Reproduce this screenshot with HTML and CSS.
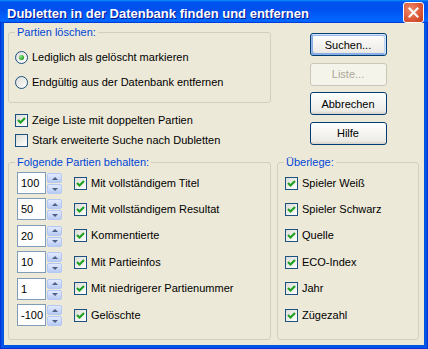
FILE: index.html
```html
<!DOCTYPE html>
<html lang="de">

<head>
    <meta charset="UTF-8">
    <title>Dubletten in der Datenbank finden und entfernen</title>
    <link rel="stylesheet" href="styles.css">
</head>

<body>
    <div class="window">
        <div class="titlebar">
            <span class="title">Dubletten in der Datenbank finden und entfernen</span>
            <div class="close">
                <svg width="11" height="11" viewBox="0 0 11 11">
                    <path d="M1.5 1.5 L9.5 9.5 M9.5 1.5 L1.5 9.5" stroke="#fff" stroke-width="2" stroke-linecap="square"></path>
                </svg>
            </div>
        </div>

        <div class="client">
            <div class="left-top">
                <fieldset class="group">
                    <legend>Partien löschen:</legend>
                    <div class="radios">
                        <div class="option"><span class="radio checked"></span>Lediglich als gelöscht markieren</div>
                        <div class="option"><span class="radio"></span>Endgültig aus der Datenbank entfernen</div>
                    </div>
                </fieldset>
                <div class="checks">
                    <div class="option"><span class="check on"><svg width="11" height="11" viewBox="0 0 11 11"><path d="M2 5 L4.5 7.5 L9 3" fill="none" stroke="#21A121" stroke-width="2.2"></path></svg></span>Zeige Liste mit doppelten Partien</div>
                    <div class="option"><span class="check"></span>Stark erweiterte Suche nach Dubletten</div>
                </div>
            </div>

            <div class="buttons">
                <div class="btn default">Suchen...</div>
                <div class="btn disabled">Liste...</div>
                <div class="btn">Abbrechen</div>
                <div class="btn">Hilfe</div>
            </div>

            <fieldset class="group rows-group">
                <legend>Folgende Partien behalten:</legend>
                <div class="rows">
                    <div class="row">
                        <span class="edit">100</span>
                        <span class="spin"><span class="up"></span><span class="down"></span></span>
                        <span class="option"><span class="check on"><svg width="11" height="11" viewBox="0 0 11 11"><path d="M2 5 L4.5 7.5 L9 3" fill="none" stroke="#21A121" stroke-width="2.2"></path></svg></span>Mit vollständigem Titel</span>
                    </div>
                    <div class="row">
                        <span class="edit">50</span>
                        <span class="spin"><span class="up"></span><span class="down"></span></span>
                        <span class="option"><span class="check on"><svg width="11" height="11" viewBox="0 0 11 11"><path d="M2 5 L4.5 7.5 L9 3" fill="none" stroke="#21A121" stroke-width="2.2"></path></svg></span>Mit vollständigem Resultat</span>
                    </div>
                    <div class="row">
                        <span class="edit">20</span>
                        <span class="spin"><span class="up"></span><span class="down"></span></span>
                        <span class="option"><span class="check on"><svg width="11" height="11" viewBox="0 0 11 11"><path d="M2 5 L4.5 7.5 L9 3" fill="none" stroke="#21A121" stroke-width="2.2"></path></svg></span>Kommentierte</span>
                    </div>
                    <div class="row">
                        <span class="edit">10</span>
                        <span class="spin"><span class="up"></span><span class="down"></span></span>
                        <span class="option"><span class="check on"><svg width="11" height="11" viewBox="0 0 11 11"><path d="M2 5 L4.5 7.5 L9 3" fill="none" stroke="#21A121" stroke-width="2.2"></path></svg></span>Mit Partieinfos</span>
                    </div>
                    <div class="row">
                        <span class="edit">1</span>
                        <span class="spin"><span class="up"></span><span class="down"></span></span>
                        <span class="option"><span class="check on"><svg width="11" height="11" viewBox="0 0 11 11"><path d="M2 5 L4.5 7.5 L9 3" fill="none" stroke="#21A121" stroke-width="2.2"></path></svg></span>Mit niedrigerer Partienummer</span>
                    </div>
                    <div class="row">
                        <span class="edit">-100</span>
                        <span class="spin"><span class="up"></span><span class="down"></span></span>
                        <span class="option"><span class="check on"><svg width="11" height="11" viewBox="0 0 11 11"><path d="M2 5 L4.5 7.5 L9 3" fill="none" stroke="#21A121" stroke-width="2.2"></path></svg></span>Gelöschte</span>
                    </div>
                </div>
            </fieldset>

            <fieldset class="group rows-group">
                <legend>Überlege:</legend>
                <div class="rows compare">
                    <div class="row"><span class="option"><span class="check on"><svg width="11" height="11" viewBox="0 0 11 11"><path d="M2 5 L4.5 7.5 L9 3" fill="none" stroke="#21A121" stroke-width="2.2"></path></svg></span>Spieler Weiß</span></div>
                    <div class="row"><span class="option"><span class="check on"><svg width="11" height="11" viewBox="0 0 11 11"><path d="M2 5 L4.5 7.5 L9 3" fill="none" stroke="#21A121" stroke-width="2.2"></path></svg></span>Spieler Schwarz</span></div>
                    <div class="row"><span class="option"><span class="check on"><svg width="11" height="11" viewBox="0 0 11 11"><path d="M2 5 L4.5 7.5 L9 3" fill="none" stroke="#21A121" stroke-width="2.2"></path></svg></span>Quelle</span></div>
                    <div class="row"><span class="option"><span class="check on"><svg width="11" height="11" viewBox="0 0 11 11"><path d="M2 5 L4.5 7.5 L9 3" fill="none" stroke="#21A121" stroke-width="2.2"></path></svg></span>ECO-Index</span></div>
                    <div class="row"><span class="option"><span class="check on"><svg width="11" height="11" viewBox="0 0 11 11"><path d="M2 5 L4.5 7.5 L9 3" fill="none" stroke="#21A121" stroke-width="2.2"></path></svg></span>Jahr</span></div>
                    <div class="row"><span class="option"><span class="check on"><svg width="11" height="11" viewBox="0 0 11 11"><path d="M2 5 L4.5 7.5 L9 3" fill="none" stroke="#21A121" stroke-width="2.2"></path></svg></span>Zügezahl</span></div>
                </div>
            </fieldset>
        </div>
    </div>
</body>

</html>
```

FILE: styles.css
```css
* {
    box-sizing: border-box;
}

body {
    margin: 0;
    font-family: "Liberation Sans", Arial, sans-serif;
    font-size: 11px;
    color: #000;
}

.window {
    width: 428px;
    height: 349px;
    display: flex;
    flex-direction: column;
    background: #0055e5;
    box-shadow: inset 0 0 0 1px #0831d9;
}

.titlebar {
    height: 29px;
    display: flex;
    align-items: center;
    justify-content: space-between;
    padding: 0 4px 0 7px;
    background: linear-gradient(180deg, #0997ff, #0053ee 8%, #0050ee 40%, #0066ff 88%, #0066ff 93%, #005bff 95%, #003dd7 96%, #003dd7);
}

.title {
    color: #fff;
    font-weight: bold;
    font-size: 13px;
    text-shadow: 1px 1px #0f1089;
    margin-top: 3px;
}

.close {
    width: 21px;
    height: 21px;
    margin-top: 2px;
    border: 1px solid #fff;
    border-radius: 3px;
    display: flex;
    align-items: center;
    justify-content: center;
    background: radial-gradient(circle at 35% 35%, #ef8a6c, #dc5a39 55%, #c2401f);
}

.client {
    flex: 1;
    margin: 0 4px 4px;
    background: #ece9d8;
    display: grid;
    grid-template-columns: 263px 142px;
    grid-template-rows: auto 1fr;
    column-gap: 6px;
    row-gap: 9px;
    padding: 3px 5px 5px 4px;
}

.group {
    margin: 0;
    min-width: 0;
    border: 1px solid #d0d0bf;
    border-radius: 3px;
    padding: 12px 6px 13px;
}

.group legend {
    padding: 0 2px;
    color: #0046d5;
    line-height: 13px;
}

.option {
    display: flex;
    align-items: center;
    gap: 4px;
    height: 13px;
    line-height: 13px;
    white-space: nowrap;
}

.radios {
    display: flex;
    flex-direction: column;
    gap: 12px;
}

.radio {
    width: 13px;
    height: 13px;
    border: 1px solid #1c5180;
    border-radius: 50%;
    background: linear-gradient(135deg, #dcdcd7, #fff);
    display: flex;
    align-items: center;
    justify-content: center;
}

.radio.checked::after {
    content: "";
    width: 5px;
    height: 5px;
    border-radius: 50%;
    background: radial-gradient(circle at 35% 35%, #8fe58d, #21a121 70%);
}

.check {
    width: 13px;
    height: 13px;
    flex: none;
    border: 1px solid #1c5180;
    background: linear-gradient(135deg, #dcdcd7, #fff);
    display: flex;
}

.checks {
    margin: 11px 0 0 7px;
    display: flex;
    flex-direction: column;
    gap: 7px;
}

.buttons {
    display: flex;
    flex-direction: column;
    align-items: center;
    gap: 6.5px;
    padding-top: 7px;
}

.btn {
    width: 77px;
    height: 23px;
    border: 1px solid #003c74;
    border-radius: 3px;
    background: linear-gradient(180deg, #fff, #ecebe6 86%, #d6d0c5);
    display: flex;
    align-items: center;
    justify-content: center;
}

.btn.default {
    box-shadow: inset -1px 1px #cee7ff, inset 1px 2px #98b8ea, inset -2px 2px #bcd4f6, inset 1px -1px #89ade4, inset 2px -2px #89ade4;
}

.btn.disabled {
    border-color: #c9c7ba;
    background: #f5f4ea;
    color: #aca899;
}

.rows-group {
    padding-top: 3px;
}

.rows {
    display: flex;
    flex-direction: column;
    gap: 4.4px;
}

.row {
    height: 22px;
    display: flex;
    align-items: center;
}

.edit {
    width: 29px;
    height: 22px;
    margin-left: 2px;
    border: 1px solid #7f9db9;
    background: #fff;
    padding-left: 3px;
    line-height: 20px;
}

.spin {
    width: 15px;
    height: 21px;
    margin: 1px 12px 0 1px;
    display: flex;
    flex-direction: column;
    gap: 1px;
}

.spin span {
    flex: 1;
    border: 1px solid #b4c8f6;
    border-radius: 2px;
    background: linear-gradient(180deg, #e2eafe, #b9cbf3);
    display: flex;
    align-items: center;
    justify-content: center;
}

.spin span::after {
    content: "";
    width: 0;
    height: 0;
    border-left: 3px solid transparent;
    border-right: 3px solid transparent;
}

.spin .up::after {
    border-bottom: 3px solid #4d6185;
}

.spin .down::after {
    border-top: 3px solid #4d6185;
}

.compare .option {
    margin-left: 1px;
}
```
